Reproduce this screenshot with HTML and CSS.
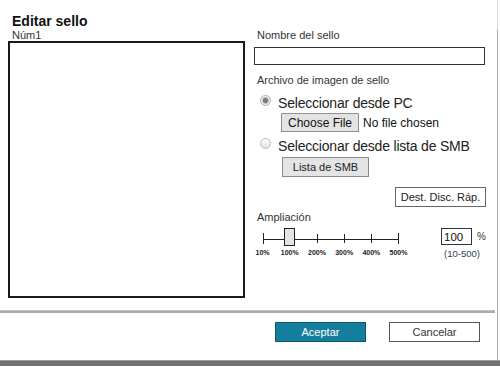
FILE: index.html
```html
<!DOCTYPE html>
<html lang="es">
<head>
<meta charset="utf-8">
<title>Editar sello</title>
<link rel="stylesheet" href="styles.css">
</head>
<body>
<div class="page">
  <div class="dialog">
    <div class="content">
      <h1 class="title">Editar sello</h1>
      <div class="cols">
        <div class="left">
          <div class="num">Núm1</div>
          <div class="preview"></div>
        </div>
        <div class="right">
          <div class="lbl">Nombre del sello</div>
          <input class="name-input" type="text">
          <div class="lbl lbl-file">Archivo de imagen de sello</div>
          <label class="radio-row row-pc"><input class="radio" type="radio" name="src" checked><span>Seleccionar desde PC</span></label>
          <div class="file-row"><button class="file-btn">Choose File</button><span class="file-text">No file chosen</span></div>
          <label class="radio-row row-smb"><input class="radio" type="radio" name="src"><span>Seleccionar desde lista de SMB</span></label>
          <div class="smb-row"><button class="smb-btn">Lista de SMB</button></div>
          <div class="dest-row"><button class="dest-btn">Dest. Disc. Ráp.</button></div>
          <div class="lbl lbl-zoom">Ampliación</div>
          <div class="zoom-row">
            <div class="slider">
              <svg class="slider-svg" width="150" height="18" viewBox="0 0 150 18">
                <g stroke="#222" stroke-width="1" shape-rendering="crispEdges">
                  <line x1="9" y1="11.5" x2="145" y2="11.5"/>
                  <line x1="9.5" y1="5" x2="9.5" y2="16"/>
                  <line x1="63.5" y1="6" x2="63.5" y2="15"/>
                  <line x1="90.5" y1="6" x2="90.5" y2="15"/>
                  <line x1="117.5" y1="6" x2="117.5" y2="15"/>
                  <line x1="144.5" y1="5" x2="144.5" y2="16"/>
                </g>
                <rect x="30.5" y="0.5" width="10" height="17" fill="#e4e4e4" stroke="#222" stroke-width="1"/>
              </svg>
              <div class="ticks">
                <span>10%</span><span>100%</span><span>200%</span><span>300%</span><span>400%</span><span>500%</span>
              </div>
            </div>
            <div class="pct">
              <div class="pct-row"><input class="pct-input" type="text" value="100"><span class="pct-sign">%</span></div>
              <div class="range">(10-500)</div>
            </div>
          </div>
        </div>
      </div>
    </div>
    <div class="sep"></div>
    <div class="footer">
      <button class="btn-ok">Aceptar</button>
      <button class="btn-cancel">Cancelar</button>
    </div>
  </div>
  <div class="edge"></div>
</div>
<div class="bottom-bar"></div>
</body>
</html>
```

FILE: styles.css
```css
* { box-sizing: border-box; }

body {
  margin: 0;
  width: 500px;
  height: 385px;
  overflow: hidden;
  background: #fff;
  color: #222;
  font-family: "Liberation Sans", Arial, sans-serif;
}

button, input {
  font-family: inherit;
  margin: 0;
  padding: 0;
}

.page {
  display: flex;
  height: 360px;
}

.dialog {
  width: 497px;
  display: flex;
  flex-direction: column;
}

.edge {
  width: 1px;
  background: linear-gradient(#dcdcdc 0, #dcdcdc 30px, #a8a8a8 30px);
}

.content {
  height: 310px;
  padding: 13px 0 0 8px;
}

.title {
  margin: 0;
  padding-left: 4px;
  font-size: 14px;
  line-height: 16px;
  font-weight: bold;
  color: #111;
}

.cols {
  display: flex;
  gap: 9px;
}

.left { width: 237px; }

.num {
  padding-left: 4px;
  font-size: 11px;
  line-height: 12px;
  color: #333;
}

.preview {
  height: 257px;
  border: 2px solid #1a1a1a;
}

.right {
  width: 232px;
  display: flex;
  flex-direction: column;
}

.lbl {
  font-size: 11px;
  line-height: 13px;
  padding-left: 3px;
  color: #333;
}

.name-input {
  margin-top: 5px;
  width: 231px;
  height: 18px;
  border: 1px solid #333;
  background: #fff;
  outline: none;
}

.lbl-file { margin-top: 9px; }

.radio-row {
  display: flex;
  align-items: flex-start;
  height: 18px;
  font-size: 14px;
  line-height: 18px;
  letter-spacing: -0.2px;
  color: #222;
}

.row-pc { margin-top: 7px; }
.row-smb { margin-top: 5px; }

.radio {
  appearance: none;
  -webkit-appearance: none;
  width: 11px;
  height: 11px;
  margin: 1px 7px 0 6px;
  border-radius: 50%;
  border: 1px solid #bdbdbd;
  background: linear-gradient(#fbfbfb, #e4e4e4);
  flex: none;
}

.radio:checked {
  background: radial-gradient(circle, #707070 0, #808080 2px, #9a9a9a 2.8px, #ececec 3.4px, #f2f2f2 100%);
  border-color: #b0b0b0;
}

.file-row {
  margin-top: 1px;
  padding-left: 27px;
  display: flex;
  align-items: center;
  height: 19px;
  font-size: 12px;
}

.file-btn {
  width: 78px;
  height: 19px;
  font-size: 12px;
  color: #111;
  background: #e3e3e3;
  border: 1px solid #929292;
}

.file-text {
  margin-left: 4px;
  color: #111;
}

.smb-row {
  margin-top: 2px;
  padding-left: 28px;
}

.smb-btn {
  width: 87px;
  height: 20px;
  font-size: 11px;
  color: #222;
  background: #e4e4e4;
  border: 1px solid #8a8a8a;
}

.dest-row {
  margin-top: 10px;
  display: flex;
  justify-content: flex-end;
}

.dest-btn {
  width: 91px;
  height: 20px;
  font-size: 11px;
  color: #222;
  background: #fff;
  border: 1px solid #666;
}

.lbl-zoom { margin-top: 4px; }

.zoom-row {
  margin-top: 4px;
  display: flex;
  align-items: flex-start;
}

.slider { width: 150px; }

.slider-svg { display: block; }

.ticks {
  margin-top: 3px;
  margin-left: -5px;
  display: grid;
  grid-template-columns: repeat(6, 27.2px);
  font-size: 7px;
  line-height: 8px;
  font-weight: bold;
  color: #222;
  text-align: center;
}

.pct {
  margin-left: 37px;
}

.pct-row {
  display: flex;
  align-items: center;
  gap: 5px;
}

.pct-input {
  width: 31px;
  height: 17px;
  border: 1px solid #333;
  padding-left: 2px;
  font-size: 11.5px;
  color: #111;
  background: #fff;
  outline: none;
}

.pct-sign {
  font-size: 10px;
  color: #333;
}

.range {
  margin-top: 3px;
  padding-left: 3px;
  font-size: 9.5px;
  line-height: 11px;
  color: #33405a;
}

.sep {
  height: 3px;
  margin-right: 2px;
  background: linear-gradient(#c4c4c4 0, #c4c4c4 1px, #ababab 1px);
}

.footer {
  height: 47px;
  display: flex;
  justify-content: flex-end;
  align-items: flex-start;
  gap: 23px;
  padding: 9px 17px 0 0;
}

.btn-ok {
  width: 91px;
  height: 20px;
  font-size: 11px;
  color: #fff;
  background: #147e9c;
  border: 1px solid #0b5a70;
}

.btn-cancel {
  width: 91px;
  height: 20px;
  font-size: 11px;
  color: #333;
  background: #fff;
  border: 1px solid #555;
}

.bottom-bar {
  height: 6px;
  background: #727272;
  border-top: 1px solid #9c9c9c;
}
```
